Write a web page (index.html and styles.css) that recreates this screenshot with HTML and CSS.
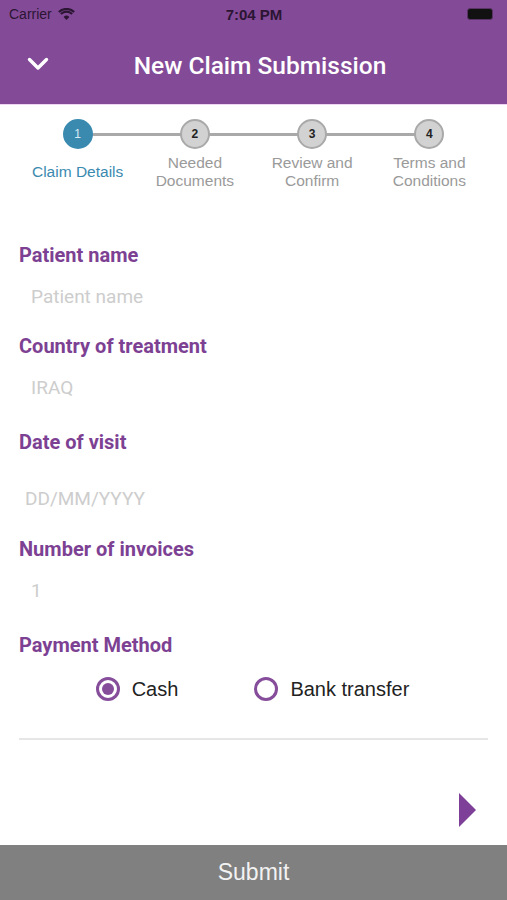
FILE: index.html
```html
<!DOCTYPE html>
<html lang="en">
<head>
  <meta charset="UTF-8">
  <meta name="viewport" content="width=device-width, initial-scale=1">
  <title>New Claim Submission</title>
  <link rel="stylesheet" href="styles.css">
</head>
<body>
  <header class="topbar">
    <div class="status">
      <span class="carrier">Carrier
        <svg class="wifi" width="17" height="12" viewBox="0 0 17 12"><path d="M8.5 12 5.6 8.9a4.2 4.2 0 0 1 5.8 0z M3.6 6.8a7 7 0 0 1 9.8 0l1.5-1.6a9.2 9.2 0 0 0-12.8 0z M0.1 3.3a12 12 0 0 1 16.8 0L15.4 4.8a9.9 9.9 0 0 0-13.8 0z" fill="#2b1533"/></svg>
      </span>
      <span class="clock">7:04 PM</span>
      <span class="battery"><span class="battery-fill"></span></span>
    </div>
    <div class="navrow">
      <svg class="back" width="22" height="14" viewBox="0 0 22 14"><path d="M2.5 2.5 11 11 19.5 2.5" fill="none" stroke="#fff" stroke-width="3.4" stroke-linecap="round" stroke-linejoin="round"/></svg>
      <h1>New Claim Submission</h1>
    </div>
  </header>

  <ol class="steps">
    <li class="step active"><span class="dot">1</span><span class="step-label">Claim Details</span></li>
    <li class="step"><span class="dot">2</span><span class="step-label">Needed<br>Documents</span></li>
    <li class="step"><span class="dot">3</span><span class="step-label">Review and<br>Confirm</span></li>
    <li class="step"><span class="dot">4</span><span class="step-label">Terms and<br>Conditions</span></li>
  </ol>

  <form class="claim">
    <div class="field f-name">
      <label>Patient name</label>
      <input type="text" class="inp" placeholder="Patient name">
    </div>
    <div class="field f-country">
      <label>Country of treatment</label>
      <input type="text" class="inp" placeholder="IRAQ">
    </div>
    <div class="field f-date">
      <label>Date of visit</label>
      <input type="text" class="inp date" placeholder="DD/MM/YYYY">
    </div>
    <div class="field f-count">
      <label>Number of invoices</label>
      <input type="text" class="inp" placeholder="1">
    </div>
    <div class="field f-pay">
      <label>Payment Method</label>
      <div class="radios">
        <span class="radio checked"><span class="ring"></span>Cash</span>
        <span class="radio"><span class="ring"></span>Bank transfer</span>
      </div>
    </div>
    <hr class="divider">
    <div class="nextrow"><span class="next"></span></div>
  </form>

  <button class="submit">Submit</button>
</body>
</html>
```

FILE: styles.css
```css
body { margin:0; width:507px; height:900px; background:#fff; font-family:Roboto, "Liberation Sans", sans-serif; position:relative; overflow:hidden; }

.topbar { background:#834b97; height:104px; border-bottom:1px solid #ecd6f2; }
.status { height:28px; display:flex; align-items:center; justify-content:space-between; padding:0 8px 0 9px; font-family:"Liberation Sans", sans-serif; color:#2b1533; }
.carrier { font-size:14px; display:flex; align-items:center; gap:6px; width:120px; }
.clock { font-size:15px; font-weight:bold; }
.battery { width:120px; display:flex; justify-content:flex-end; }
.battery-fill { display:block; width:24px; height:10px; background:#111; border:1px solid #5a3466; border-radius:3px; margin-right:6px; }
.navrow { height:76px; display:flex; align-items:center; position:relative; margin-top:-1px; }
.back { position:absolute; left:27px; top:30px; }
h1 { margin:0; width:100%; text-align:center; color:#fff; font-size:24.5px; font-weight:500; padding-left:13px; }

.steps { list-style:none; margin:0; padding:14px 19px 0; display:grid; grid-template-columns:repeat(4, 1fr); font-family:"Liberation Sans", sans-serif; }
.step { display:flex; flex-direction:column; align-items:center; position:relative; }
.step:not(:last-child)::after { content:""; position:absolute; top:14px; left:50%; width:100%; height:3px; background:#a9a9a9; }
.dot { width:26px; height:26px; border-radius:50%; background:#d2d2d2; border:2px solid #a9a9a9; color:#222; font-size:12px; font-weight:bold; display:flex; align-items:center; justify-content:center; position:relative; z-index:1; }
.step.active .dot { background:#3a8ab0; border-color:#3a8ab0; color:#d8eaf3; font-weight:normal; }
.step-label { margin-top:5px; height:36px; display:flex; align-items:center; text-align:center; font-size:15.5px; line-height:18px; color:#9a9a9a; white-space:nowrap; }
.step.active .step-label { color:#3a8ab0; }

.claim { padding:53px 19px 0; }
.field label { display:block; color:#7d4193; font-size:20px; font-weight:700; line-height:24px; }
.inp { display:block; width:100%; box-sizing:border-box; border:none; outline:none; height:40px; margin-top:9px; padding:0 12px; font-family:Roboto, sans-serif; font-size:19px; color:#333; background:transparent; }
.inp::placeholder { color:#cdcdcd; }
.inp.date { margin-top:24px; padding-left:6px; }
.f-name { margin-bottom:18px; }
.f-country { margin-bottom:23px; }
.f-date { margin-bottom:19px; }
.f-count { margin-bottom:23px; }

.radios { display:flex; justify-content:center; gap:76px; margin-top:16px; height:32px; align-items:center; padding-right:2px; }
.radio { display:flex; align-items:center; gap:12px; font-family:"Liberation Sans", sans-serif; font-size:20px; color:#222; }
.ring { width:24px; height:24px; box-sizing:border-box; border:3px solid #864d9b; border-radius:50%; display:flex; align-items:center; justify-content:center; }
.radio.checked .ring::after { content:""; width:12px; height:12px; border-radius:50%; background:#864d9b; }

.divider { border:none; height:2px; background:#e6e6e6; margin:33px 0 0; }
.nextrow { display:flex; justify-content:flex-end; padding:53px 12px 0 0; }
.next { width:0; height:0; border-top:17px solid transparent; border-bottom:17px solid transparent; border-left:17px solid #7d3f98; }

.submit { position:absolute; left:0; bottom:0; width:100%; height:55px; border:none; background:#808080; color:#f2f2f2; font-family:"Liberation Sans", sans-serif; font-size:23px; }
```
